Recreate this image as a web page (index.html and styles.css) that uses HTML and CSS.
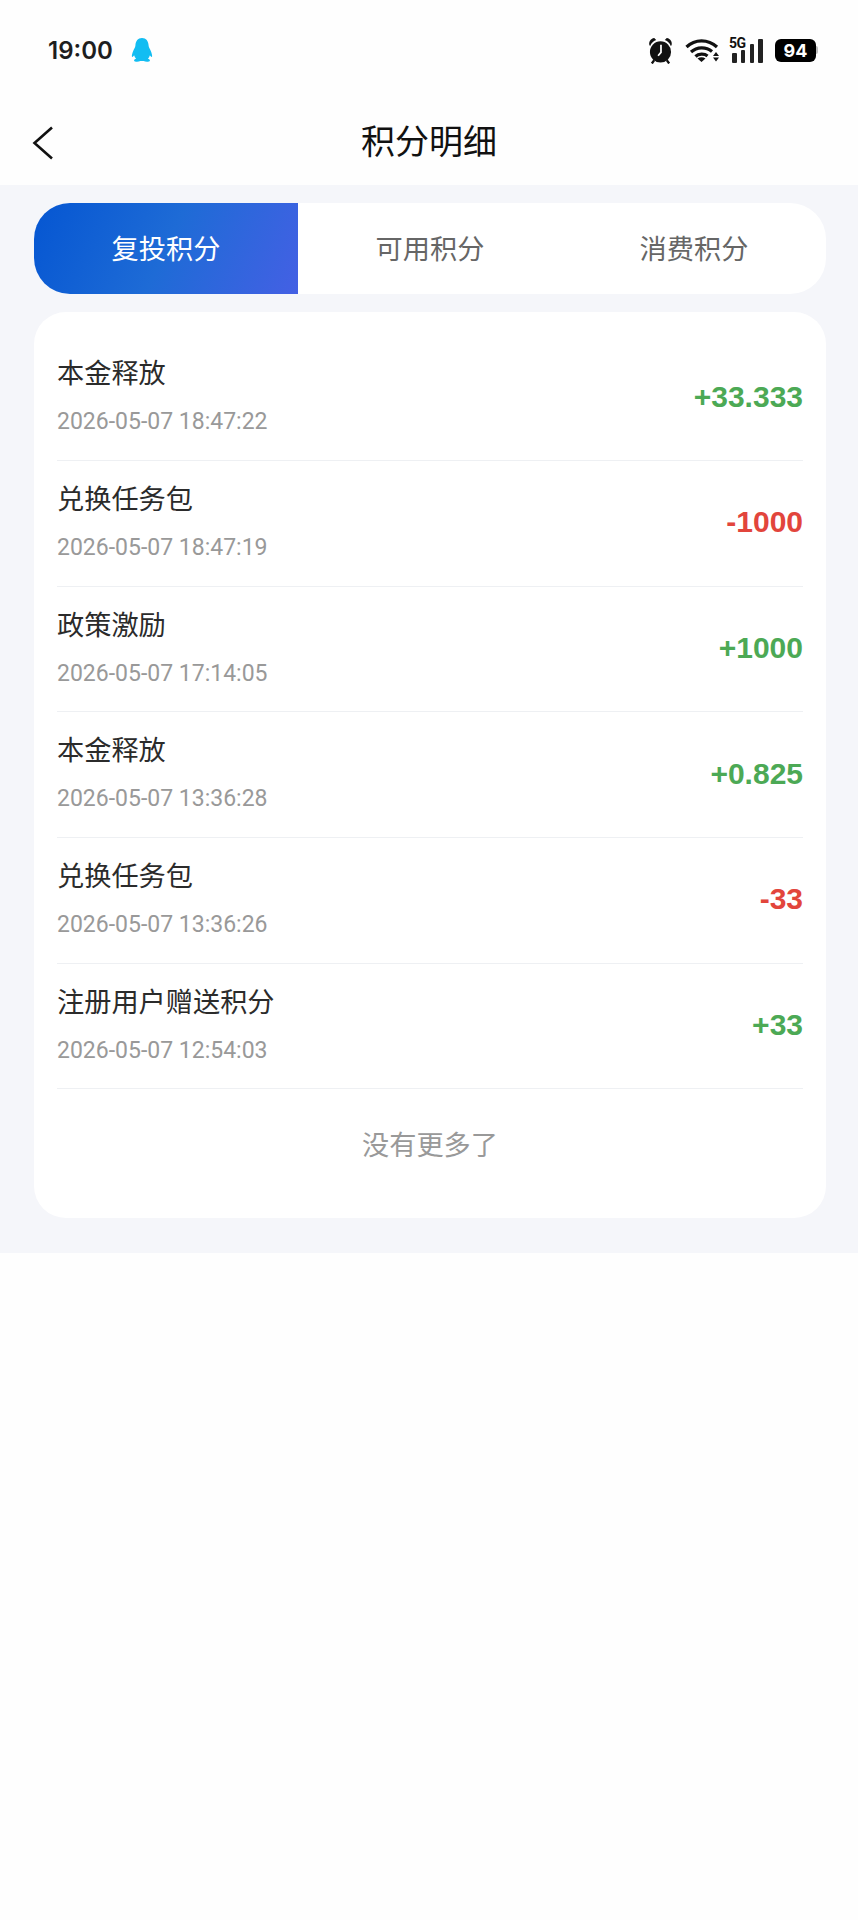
FILE: index.html
```html
<!DOCTYPE html>
<html lang="zh-CN">
<head>
<meta charset="utf-8">
<title>积分明细</title>
<link rel="stylesheet" href="styles.css">
</head>
<body>
<header class="top">
  <div class="status">
    <div class="status-left">
      <span class="time">19:00</span>
      <svg class="qq" viewBox="0 0 22 24" aria-hidden="true"><path d="M11 0C6.8 0 4.6 3.2 4.4 7.4 4.3 9.2 3.2 10.3 2.3 12.7 1.5 14.8 .6 17.2 .9 18.5 1.2 19.6 2.6 18.4 3.1 17.3 3.5 18.8 4.2 19.9 5.1 20.7 3.9 21.1 2.9 21.8 3.1 22.7 3.5 24 7.5 24 9.3 23.1 9.8 23 10.3 22.9 11 22.9 11.7 22.9 12.2 23 12.7 23.1 14.5 24 18.5 24 18.9 22.7 19.1 21.8 18.1 21.1 16.9 20.7 17.8 19.9 18.5 18.8 18.9 17.3 19.4 18.4 20.8 19.6 21.1 18.5 21.4 17.2 20.5 14.8 19.7 12.7 18.8 10.3 17.7 9.2 17.6 7.4 17.4 3.2 15.2 0 11 0Z"/></svg>
    </div>
    <div class="status-right">
      <svg class="alarm" viewBox="0 0 26 28" aria-hidden="true">
        <circle class="fill" cx="13" cy="15.5" r="11"/>
        <path class="fill" d="M1.5 8.5C.5 5.5 2.5 1.5 6.5 1L8.5 3C5.3 4.300 3.3 6.3 2.3 9.3ZM24.5 8.5C25.500 5.5 23.5 1.5 19.5 1L17.5 3C20.7 4.3 22.700 6.3 23.7 9.3Z"/>
        <path class="hand" d="M13.5 8V16L10.5 19.5"/>
        <path class="leg" d="M6.5 24L4 27.5M19.5 24L22 27.5"/>
      </svg>
      <svg class="wifi" viewBox="0 0 35 24" aria-hidden="true">
        <path class="arc" d="M1.5 9C10 .7 23 .7 32 9"/>
        <path class="arc" d="M6 14C12 8.5 21 8.5 27 13.5"/>
        <path class="arc" d="M10.5 18.5C13.5 15.5 19.5 15.5 22.5 18"/>
        <path class="fill" d="M12.5 20.5C15 18.8 18 18.8 20.5 20.5L16.5 24ZM28 18L31 14 34 18ZM28 19.5H34L31 23.5Z"/>
      </svg>
      <div class="signal">
        <span class="five-g">5G</span>
        <div class="bars">
          <i class="bar bar-1"></i><i class="bar bar-2"></i><i class="bar bar-3"></i><i class="bar bar-4"></i>
        </div>
      </div>
      <div class="battery"><span class="battery-level">94</span><i class="battery-cap"></i></div>
    </div>
  </div>
  <nav class="nav">
    <svg class="back" viewBox="0 0 22 36" aria-hidden="true"><path d="M20 2.5L2.5 18 20 33.5"/></svg>
    <h1 class="nav-title">积分明细</h1>
  </nav>
</header>

<main class="content">
  <div class="tabs">
    <div class="tab tab-active">复投积分</div>
    <div class="tab">可用积分</div>
    <div class="tab">消费积分</div>
  </div>
  <section class="card">
    <div class="row">
      <div class="row-main"><div class="row-title">本金释放</div><div class="row-date">2026-05-07 18:47:22</div></div>
      <div class="amount plus">+33.333</div>
    </div>
    <div class="row">
      <div class="row-main"><div class="row-title">兑换任务包</div><div class="row-date">2026-05-07 18:47:19</div></div>
      <div class="amount minus">-1000</div>
    </div>
    <div class="row">
      <div class="row-main"><div class="row-title">政策激励</div><div class="row-date">2026-05-07 17:14:05</div></div>
      <div class="amount plus">+1000</div>
    </div>
    <div class="row">
      <div class="row-main"><div class="row-title">本金释放</div><div class="row-date">2026-05-07 13:36:28</div></div>
      <div class="amount plus">+0.825</div>
    </div>
    <div class="row">
      <div class="row-main"><div class="row-title">兑换任务包</div><div class="row-date">2026-05-07 13:36:26</div></div>
      <div class="amount minus">-33</div>
    </div>
    <div class="row">
      <div class="row-main"><div class="row-title">注册用户赠送积分</div><div class="row-date">2026-05-07 12:54:03</div></div>
      <div class="amount plus">+33</div>
    </div>
    <p class="no-more">没有更多了</p>
  </section>
</main>
</body>
</html>
```

FILE: styles.css
```css
* { box-sizing: border-box; }
html, body { margin: 0; padding: 0; }
body {
  width: 858px;
  min-height: 1920px;
  background: #fefefe;
  color: #222;
  font-family: "Roboto", "Noto Sans CJK SC", sans-serif;
}
.top { height: 185px; display: flex; flex-direction: column; background: #fefefe; }
.status {
  height: 100px;
  padding: 0 40px 0 48px;
  display: flex;
  align-items: center;
  justify-content: space-between;
}
.status-left { display: flex; align-items: center; gap: 18px; }
.time {
  font-family: "Inter", sans-serif;
  font-size: 24px;
  font-weight: 600;
  color: #1e1e1e;
}
.qq { width: 22px; height: 24px; fill: #12bdf2; }
.status-right { display: flex; align-items: center; }
.alarm { width: 25px; height: 27px; margin-right: 12px; }
.fill { fill: #111; }
.alarm .hand { fill: none; stroke: #fff; stroke-width: 1.8; }
.alarm .leg { fill: none; stroke: #111; stroke-width: 2.4; }
.wifi { width: 35px; height: 24px; margin-right: 9px; }
.wifi .arc { fill: none; stroke: #111; stroke-width: 3.2; }
.signal {
  width: 34px;
  height: 25px;
  margin-right: 12px;
  position: relative;
  display: flex;
  align-items: flex-end;
}
.five-g {
  position: absolute;
  left: 0;
  top: -1px;
  font-family: "Roboto", sans-serif;
  font-size: 14px;
  line-height: 13px;
  font-weight: 700;
  letter-spacing: -0.5px;
  color: #111;
}
.bars {
  width: 31px;
  margin-left: 3px;
  display: flex;
  align-items: flex-end;
  justify-content: space-between;
}
.bar { display: block; width: 4.5px; background: #222; border-radius: 1px; }
.bar-1 { height: 10px; }
.bar-2 { height: 13px; }
.bar-3 { height: 19px; }
.bar-4 { height: 24px; }
.battery { display: flex; align-items: center; }
.battery-level {
  width: 41px;
  height: 23px;
  background: #000;
  border-radius: 6px;
  color: #fff;
  font-family: "Inter", sans-serif;
  font-size: 18px;
  font-weight: 700;
  line-height: 23px;
  text-align: center;
}
.battery-cap { width: 2px; height: 8px; background: #bbb; border-radius: 0 2px 2px 0; }
.nav {
  height: 85px;
  position: relative;
  display: flex;
  align-items: flex-start;
  justify-content: center;
}
.back {
  position: absolute;
  left: 32px;
  top: 25px;
  width: 22px;
  height: 36px;
  fill: none;
  stroke: #111;
  stroke-width: 2.6;
}
.nav-title {
  margin: 18px 0 0;
  font-size: 34px;
  line-height: 48px;
  font-weight: 400;
  color: #111;
}
.content {
  background: #f5f6fa;
  height: 1068px;
  padding: 18px 32px 0 34px;
}
.tabs {
  height: 91px;
  display: flex;
  background: #fff;
  border-radius: 36px;
  overflow: hidden;
}
.tab {
  flex: 1;
  display: flex;
  align-items: center;
  justify-content: center;
  padding-bottom: 4px;
  font-size: 27.2px;
  color: #666;
}
.tab-active {
  flex: 0 0 264px;
  background: linear-gradient(115deg, #0556d2 0%, #1e6bd6 50%, #4460e4 100%);
  color: #fff;
}
.card {
  margin-top: 18px;
  height: 906px;
  background: #fff;
  border-radius: 32px;
  padding: 23.3px 23px 0;
}
.row {
  height: 125.7px;
  padding-bottom: 2px;
  display: flex;
  align-items: center;
  justify-content: space-between;
  border-bottom: 1px solid #eef0f3;
}
.row-main { display: flex; flex-direction: column; gap: 15px; }
.row-title { font-size: 27.2px; line-height: 36px; color: #2b2b2b; }
.row-date { font-size: 23px; line-height: 30px; color: #999; }
.amount {
  font-family: "Liberation Sans", sans-serif;
  font-size: 30px;
  font-weight: 700;
}
.plus { color: #4ca955; }
.minus { color: #e2453c; }
.no-more {
  margin: 39px 0 0;
  font-size: 27.2px;
  line-height: 36px;
  color: #999;
  text-align: center;
}
```
